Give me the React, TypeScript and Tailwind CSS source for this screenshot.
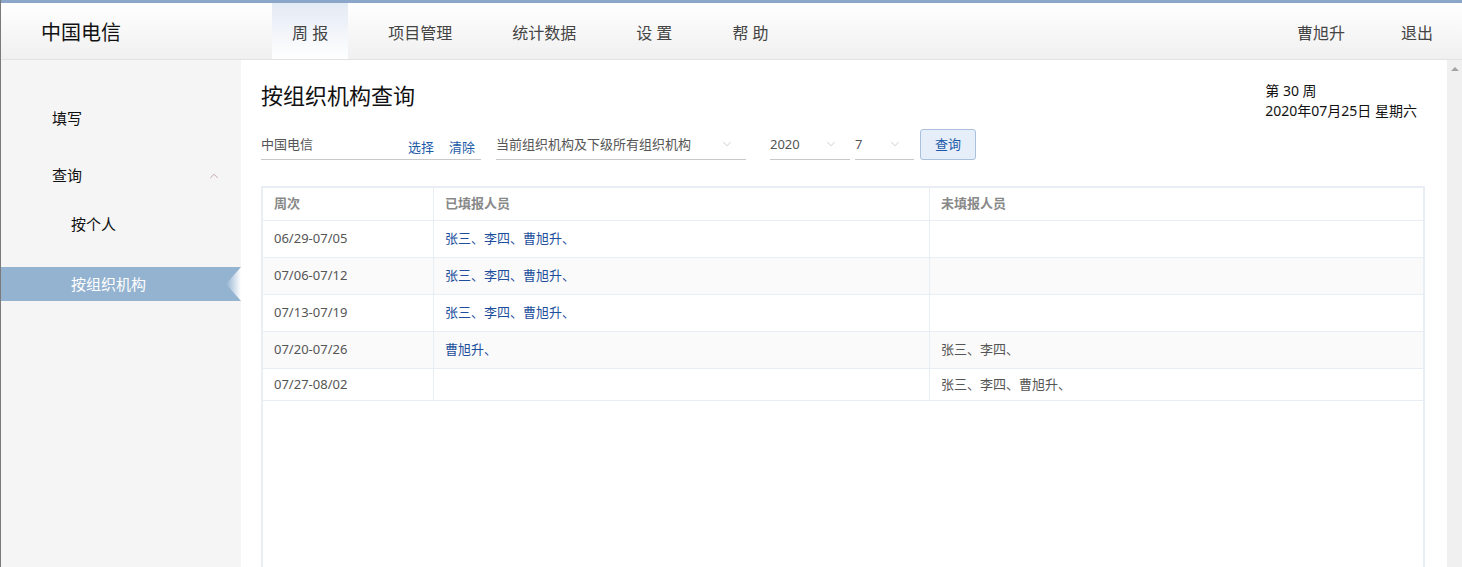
import { ChevronDown, ChevronUp } from "lucide-react";

const font = { fontFamily: '"Noto Sans", "Noto Sans CJK SC", sans-serif' };

const navItems = ["周 报", "项目管理", "统计数据", "设 置", "帮 助"];

const rows = [
  { week: "06/29-07/05", done: "张三、李四、曹旭升、", todo: "" },
  { week: "07/06-07/12", done: "张三、李四、曹旭升、", todo: "" },
  { week: "07/13-07/19", done: "张三、李四、曹旭升、", todo: "" },
  { week: "07/20-07/26", done: "曹旭升、", todo: "张三、李四、" },
  { week: "07/27-08/02", done: "", todo: "张三、李四、曹旭升、" },
];

const Header = () => (
  <div className="flex h-[57px] shrink-0 items-stretch border-b border-[#e2e2e2] bg-gradient-to-b from-white to-[#f0f0f0]">
    <div className="flex w-[271px] items-center pl-[40px] pt-[4px] text-[20px] leading-none text-[#111]">中国电信</div>
    <nav className="flex gap-5">
      {navItems.map((item, i) => (
        <div
          key={item}
          className={`flex items-center px-5 pt-[4px] text-[16px] leading-none text-[#444] ${
            i === 0 ? "bg-gradient-to-b from-[#e4eaf4] to-white" : ""
          }`}
        >
          {item}
        </div>
      ))}
    </nav>
    <div className="ml-auto flex items-center gap-[56px] pr-[29px] pt-[4px] text-[16px] leading-none text-[#444]">
      <span>曹旭升</span>
      <span>退出</span>
    </div>
  </div>
);

const Sidebar = () => (
  <aside className="flex w-[240px] shrink-0 flex-col bg-[#f5f5f5] pt-[51px] text-[15px] leading-none text-[#111]">
    <div className="pl-[51px]">填写</div>
    <div className="mt-[42px] flex items-center justify-between pl-[51px] pr-[20px]">
      <span>查询</span>
      <ChevronUp size={14} strokeWidth={1.5} className="text-[#b99d9d]" />
    </div>
    <div className="mt-[34px] pl-[70px]">按个人</div>
    <div className="relative mt-[35px] flex h-[34px] items-center bg-[#94b3d1] pl-[70px] text-white">
      按组织机构
      <svg className="absolute right-0 top-0" width="16" height="34" viewBox="0 0 16 34">
        <defs>
          <linearGradient id="notch" x1="0" y1="0" x2="1" y2="0">
            <stop offset="0" stopColor="#94b3d1" />
            <stop offset="1" stopColor="#ffffff" />
          </linearGradient>
        </defs>
        <polygon points="16,0 1,17 16,34" fill="url(#notch)" />
      </svg>
    </div>
  </aside>
);

const Select = ({ value, width }: { value: string; width: string }) => (
  <div className={`flex h-[31px] items-center justify-between border-b border-[#c8c8c8] ${width}`}>
    <span className="text-[13px] leading-none text-[#555]">{value}</span>
    <ChevronDown size={14} strokeWidth={1.2} className="mr-[12px] text-[#bbb]" />
  </div>
);

const Filters = () => (
  <div className="mt-[8px] flex items-end">
    <div className="flex h-[31px] w-[220px] items-center justify-between border-b border-[#c8c8c8]">
      <span className="text-[13px] leading-none text-[#555]">中国电信</span>
      <div className="flex gap-[15px] pr-[6px] pt-[6px] text-[13px] leading-none text-[#1d5aa8]">
        <span>选择</span>
        <span>清除</span>
      </div>
    </div>
    <div className="ml-[15px]">
      <Select value="当前组织机构及下级所有组织机构" width="w-[250px]" />
    </div>
    <div className="ml-[24px]">
      <Select value="2020" width="w-[80px]" />
    </div>
    <div className="ml-[5px]">
      <Select value="7" width="w-[59px]" />
    </div>
    <button className="ml-[6px] flex h-[31px] w-[56px] items-center justify-center rounded-[3px] border border-[#aac0dd] bg-[#e6eef9] text-[13px] leading-none text-[#1d5aa8]">
      查询
    </button>
  </div>
);

const Table = () => (
  <div className="mt-[26px] h-[420px] w-[1164px] border-l-2 border-r-2 border-t-2 border-[#e9edf4] bg-white">
    <div className="grid grid-cols-[170px_496px_1fr] border-b border-[#e9edf4] text-[13px] font-bold text-[#888]">
      <div className="flex h-[32px] items-center px-[11px]">周次</div>
      <div className="flex h-[32px] items-center border-l border-[#e9edf4] px-[11px]">已填报人员</div>
      <div className="flex h-[32px] items-center border-l border-[#e9edf4] px-[11px]">未填报人员</div>
    </div>
    {rows.map((row, i) => (
      <div
        key={row.week}
        className={`grid grid-cols-[170px_496px_1fr] border-b border-[#e9edf4] text-[13px] ${
          i % 2 === 1 ? "bg-[#fafafa]" : "bg-white"
        }`}
      >
        <div className={`flex ${i === 4 ? "h-[31px]" : "h-[36px]"} items-center px-[11px] text-[#555]`}>{row.week}</div>
        <div className="flex items-center border-l border-[#e9edf4] px-[11px] text-[#1d4f9c]">{row.done}</div>
        <div className="flex items-center border-l border-[#e9edf4] px-[11px] text-[#555]">{row.todo}</div>
      </div>
    ))}
  </div>
);

const Scrollbar = () => (
  <div className="flex w-[15px] shrink-0 flex-col items-center bg-[#f0f0f0] pt-[7px]">
    <div className="h-0 w-0 border-x-[4px] border-b-[4px] border-x-transparent border-b-[#a3a3a3]" />
  </div>
);

export default function App() {
  return (
    <div className="flex h-[567px] flex-col overflow-hidden border-l border-[#7a7a7a] bg-white" style={font}>
      <div className="h-[3px] shrink-0 bg-[#8aa6c8]" />
      <Header />
      <div className="flex min-h-0 flex-1">
        <Sidebar />
        <main className="min-w-0 flex-1 pl-[20px] pt-[20px]">
          <div className="flex">
            <h1 className="text-[22px] leading-[30px] text-[#111]">按组织机构查询</h1>
            <div className="ml-auto pr-[30px] pt-[1px] text-[14px] leading-[20px] text-[#111]">
              <div>第 30 周</div>
              <div>2020年07月25日 星期六</div>
            </div>
          </div>
          <Filters />
          <Table />
        </main>
        <Scrollbar />
      </div>
    </div>
  );
}
